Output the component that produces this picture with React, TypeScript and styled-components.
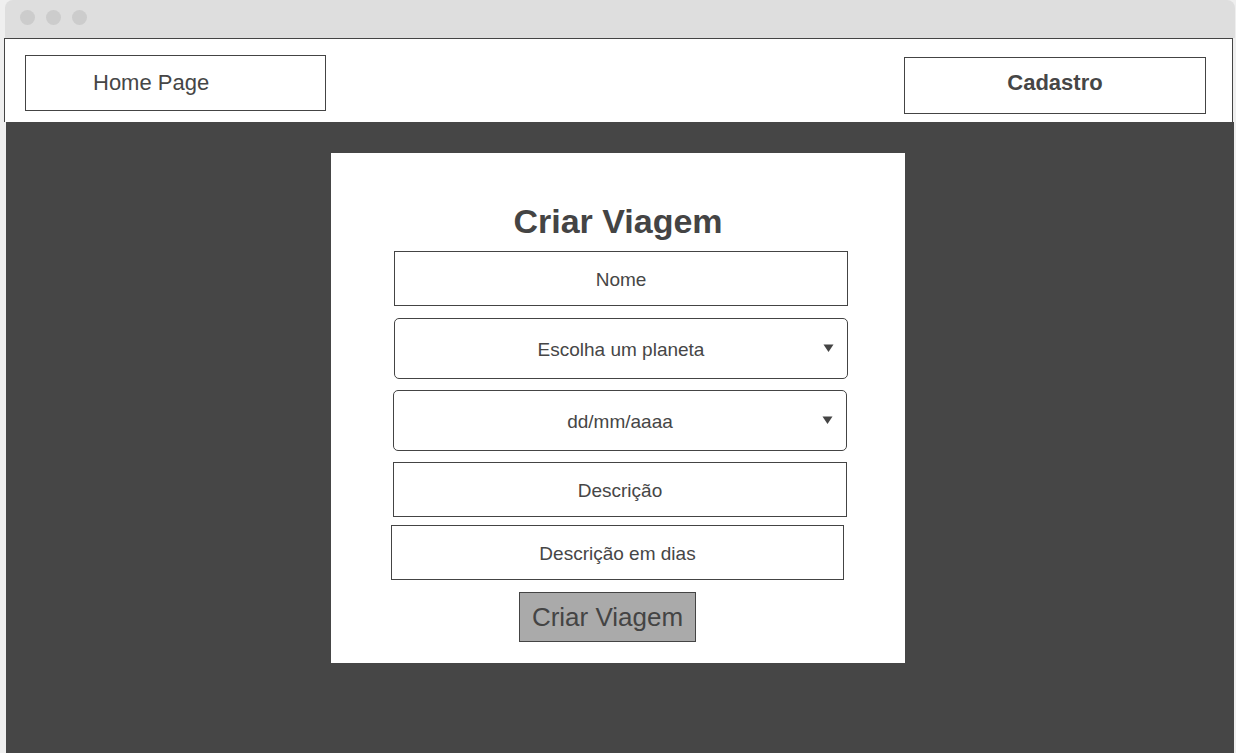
import React from "react";
import styled, { createGlobalStyle } from "styled-components";

const GlobalStyle = createGlobalStyle`
  html, body {
    margin: 0;
    padding: 0;
    background: #efefef;
    font-family: "Liberation Sans", Arial, sans-serif;
    overflow: hidden;
  }
  * { box-sizing: border-box; }
`;

const Window = styled.div`
  margin-left: 5px;
  width: 1230px;
  height: 753px;
  display: flex;
  flex-direction: column;
`;

const TitleBar = styled.div`
  height: 38px;
  background: #dedede;
  border-radius: 8px 8px 0 0;
  display: flex;
  align-items: center;
  gap: 11px;
  padding: 0 0 4px 15px;
`;

const Dot = styled.span`
  width: 15px;
  height: 15px;
  border-radius: 50%;
  background: #cccccc;
`;

const Header = styled.header`
  margin-left: -1px;
  width: 1229px;
  height: 84px;
  background: #ffffff;
  border: 1px solid #444444;
  border-bottom: none;
  display: flex;
  justify-content: space-between;
  align-items: flex-start;
  padding: 0 26px 0 20px;
`;

const NavBox = styled.div<{ $mt: number; $w: number; $h: number; $bold?: boolean; $padLeft?: number; $padBottom?: number }>`
  margin-top: ${(p) => p.$mt}px;
  width: ${(p) => p.$w}px;
  height: ${(p) => p.$h}px;
  border: 1px solid #444444;
  display: flex;
  align-items: center;
  justify-content: ${(p) => (p.$padLeft ? "flex-start" : "center")};
  padding-left: ${(p) => p.$padLeft ?? 0}px;
  padding-bottom: ${(p) => p.$padBottom ?? 0}px;
  font-size: 22px;
  font-weight: ${(p) => (p.$bold ? 700 : 400)};
  color: #464646;
`;

const Main = styled.main`
  flex: 1;
  margin-left: 1px;
  width: 1228px;
  background: #464646;
  padding: 31px 0 0 325px;
`;

const Card = styled.section`
  width: 574px;
  height: 510px;
  background: #ffffff;
  padding-top: 49px;
  display: flex;
  flex-direction: column;
`;

const Title = styled.h1`
  margin: 0;
  text-align: center;
  font-size: 34px;
  line-height: 38px;
  font-weight: 700;
  color: #444444;
`;

const Field = styled.div<{ $mt: number; $left: number; $w: number; $h: number; $rounded?: boolean }>`
  position: relative;
  margin-top: ${(p) => p.$mt}px;
  margin-left: ${(p) => p.$left}px;
  width: ${(p) => p.$w}px;
  height: ${(p) => p.$h}px;
  border: 1px solid #444444;
  border-radius: ${(p) => (p.$rounded ? "5px" : "0")};
  display: flex;
  align-items: center;
  justify-content: center;
  padding-top: 2px;
  font-size: 19px;
  color: #464646;
`;

const Caret = styled.svg`
  position: absolute;
  right: 13px;
  top: 50%;
  margin-top: -5px;
  width: 11px;
  height: 9px;
`;

const SubmitButton = styled.button`
  margin-top: 12px;
  margin-left: 188px;
  width: 177px;
  height: 50px;
  background: #aaaaaa;
  border: 1px solid #444444;
  border-radius: 0;
  font-family: "Liberation Sans", Arial, sans-serif;
  font-size: 26px;
  color: #444444;
  padding: 0;
  display: flex;
  align-items: center;
  justify-content: center;
`;

const DownCaret = () => (
  <Caret viewBox="0 0 11 9">
    <path d="M0.5 0.5 H10.5 L5.5 8 Z" fill="#444444" />
  </Caret>
);

export default function App() {
  return (
    <>
      <GlobalStyle />
      <Window>
        <TitleBar>
          <Dot />
          <Dot />
          <Dot />
        </TitleBar>
        <Header>
          <NavBox $mt={16} $w={301} $h={56} $padLeft={67}>
            Home Page
          </NavBox>
          <NavBox $mt={18} $w={302} $h={57} $bold $padBottom={6}>
            Cadastro
          </NavBox>
        </Header>
        <Main>
          <Card>
            <Title>Criar Viagem</Title>
            <Field $mt={11} $left={63} $w={454} $h={55}>
              Nome
            </Field>
            <Field $mt={12} $left={63} $w={454} $h={61} $rounded>
              Escolha um planeta
              <DownCaret />
            </Field>
            <Field $mt={11} $left={62} $w={454} $h={61} $rounded>
              dd/mm/aaaa
              <DownCaret />
            </Field>
            <Field $mt={11} $left={62} $w={454} $h={55}>
              Descrição
            </Field>
            <Field $mt={8} $left={60} $w={453} $h={55}>
              Descrição em dias
            </Field>
            <SubmitButton>Criar Viagem</SubmitButton>
          </Card>
        </Main>
      </Window>
    </>
  );
}
